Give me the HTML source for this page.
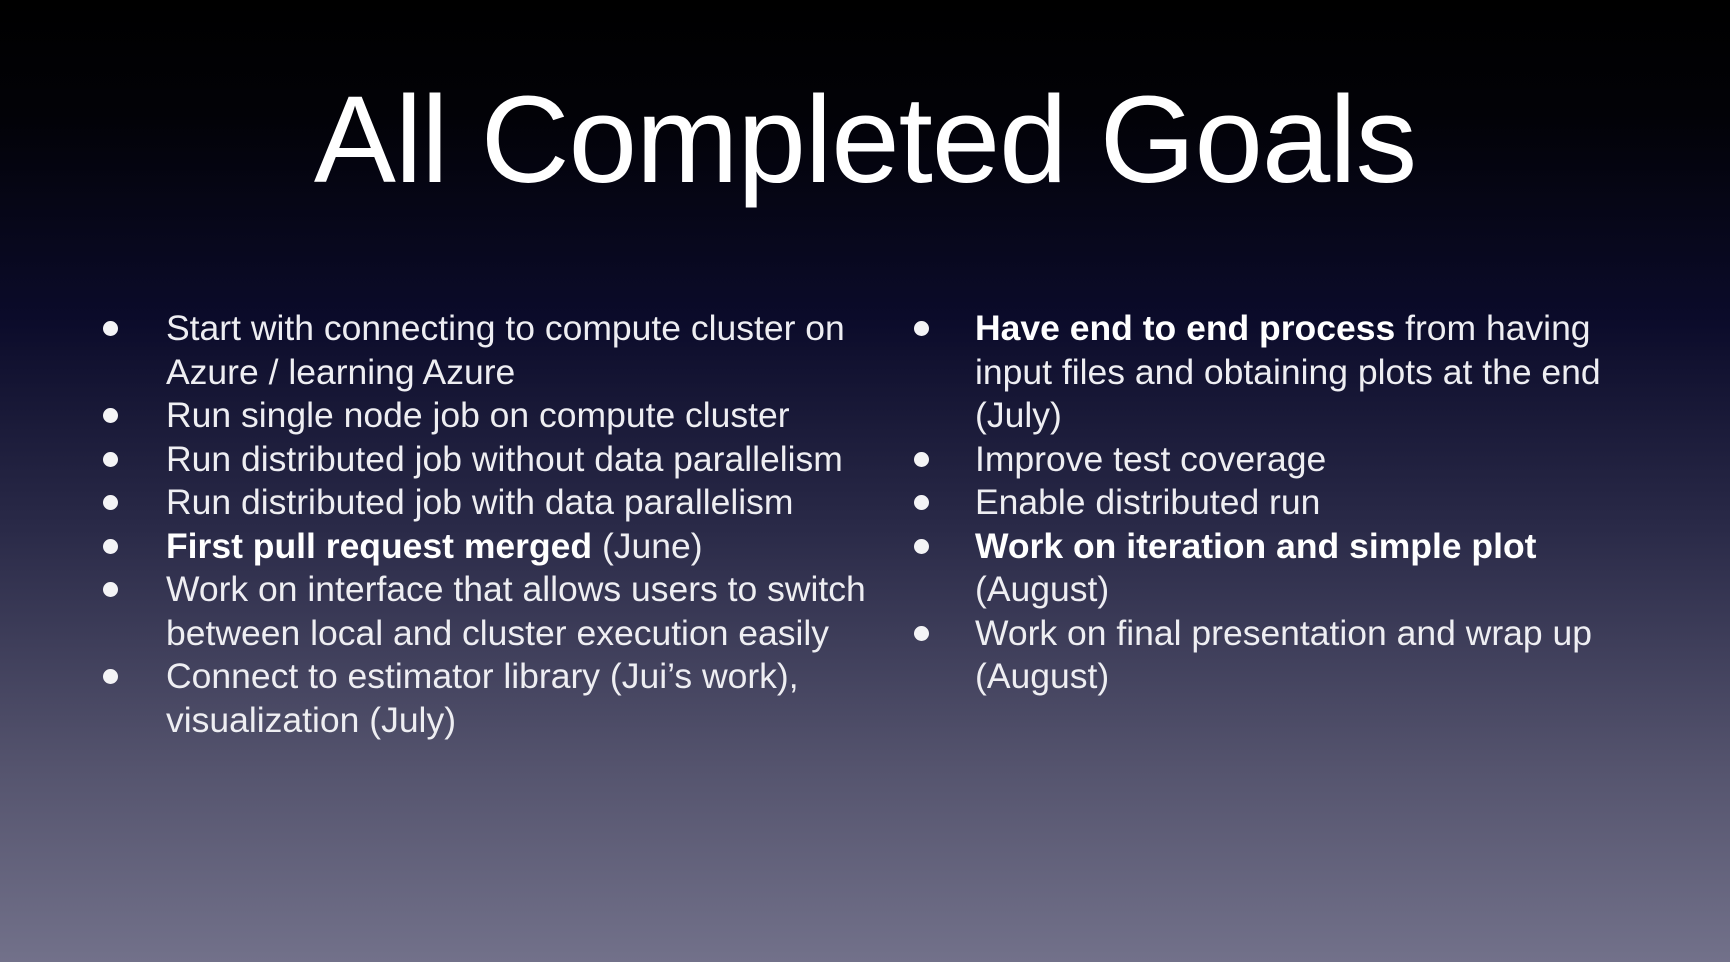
<!DOCTYPE html>
<html><head><meta charset="utf-8"><style>
html,body{margin:0;padding:0}
body{width:1730px;height:962px;overflow:hidden;position:relative;
background:linear-gradient(to bottom,#000 0%,#020207 12%,#0b0b2a 33%,#2a2a48 55%,#55546e 80%,#72718a 100%);
font-family:"Liberation Sans",sans-serif;color:#f2f2f4}
h1{position:absolute;left:0;width:1730px;top:66px;margin:0;text-align:center;font-weight:normal;font-size:123px;line-height:150px;color:#fff;letter-spacing:-1px}
.l{position:absolute;font-size:35.5px;line-height:43.5px;white-space:nowrap;color:#eeeef2}
.l b{color:#fff}
.b{position:absolute;width:15px;height:15px;border-radius:50%;background:#f4f4f6}
</style></head><body>
<h1>All Completed Goals</h1>
<div class="b" style="left:103px;top:321px"></div>
<div class="l" style="left:166px;top:307px">Start with connecting to compute cluster on</div>
<div class="l" style="left:166px;top:350.5px">Azure / learning Azure</div>
<div class="b" style="left:103px;top:408px"></div>
<div class="l" style="left:166px;top:394px">Run single node job on compute cluster</div>
<div class="b" style="left:103px;top:451.5px"></div>
<div class="l" style="left:166px;top:437.5px">Run distributed job without data parallelism</div>
<div class="b" style="left:103px;top:495px"></div>
<div class="l" style="left:166px;top:481px">Run distributed job with data parallelism</div>
<div class="b" style="left:103px;top:538.5px"></div>
<div class="l" style="left:166px;top:524.5px"><b>First pull request merged</b> (June)</div>
<div class="b" style="left:103px;top:582px"></div>
<div class="l" style="left:166px;top:568px">Work on interface that allows users to switch</div>
<div class="l" style="left:166px;top:611.5px">between local and cluster execution easily</div>
<div class="b" style="left:103px;top:669px"></div>
<div class="l" style="left:166px;top:655px">Connect to estimator library (Jui’s work),</div>
<div class="l" style="left:166px;top:698.5px">visualization (July)</div>
<div class="b" style="left:914px;top:321px"></div>
<div class="l" style="left:975px;top:307px"><b>Have end to end process</b> from having</div>
<div class="l" style="left:975px;top:350.5px">input files and obtaining plots at the end</div>
<div class="l" style="left:975px;top:394px">(July)</div>
<div class="b" style="left:914px;top:451.5px"></div>
<div class="l" style="left:975px;top:437.5px">Improve test coverage</div>
<div class="b" style="left:914px;top:495px"></div>
<div class="l" style="left:975px;top:481px">Enable distributed run</div>
<div class="b" style="left:914px;top:538.5px"></div>
<div class="l" style="left:975px;top:524.5px"><b>Work on iteration and simple plot</b></div>
<div class="l" style="left:975px;top:568px">(August)</div>
<div class="b" style="left:914px;top:625.5px"></div>
<div class="l" style="left:975px;top:611.5px">Work on final presentation and wrap up</div>
<div class="l" style="left:975px;top:655px">(August)</div>
</body></html>
